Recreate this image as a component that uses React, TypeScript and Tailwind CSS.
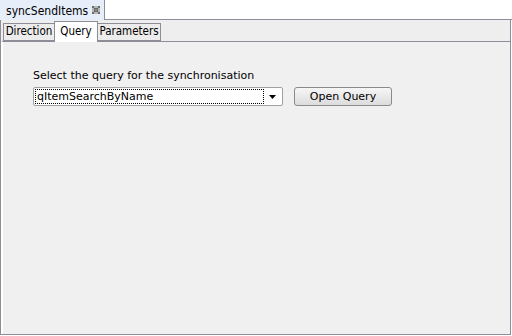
const TABS = [
  { name: "Direction", w: "w-[52px]" },
  { name: "Query", w: "w-[44px]" },
  { name: "Parameters", w: "w-[64px]" },
];

function CloseIcon() {
  return (
    <svg width="8" height="8" viewBox="0 0 8 8" shapeRendering="crispEdges">
      <rect x="0" y="0" width="8" height="8" fill="#b8b8b8" />
      <path
        d="M0 0h2v2H0zM6 0h2v2H6zM2 2h4v4H2zM0 6h2v2H0zM6 6h2v2H6z"
        fill="#6a6a6a"
      />
      <path d="M3 3h2v2H3z" fill="#8a8a8a" />
    </svg>
  );
}

export default function App() {
  const active = "Query";
  return (
    <div className="w-[512px] h-[336px] bg-white flex flex-col text-[11px] text-black font-['Tahoma','DejaVu_Sans',sans-serif] overflow-hidden">
      {/* Editor tab header */}
      <div className="flex h-[20px] shrink-0">
        <div className="w-[105px] flex items-center justify-between pl-[6px] pr-[4px] bg-[#e6eef9] border-r border-[#8d8e98]">
          <span className="text-[12px] leading-none pt-[1px] font-['DejaVu_Sans_Condensed',sans-serif]">
            syncSendItems
          </span>
          <CloseIcon />
        </div>
        <div className="flex-1 border-b border-[#8d8e98]" />
      </div>

      {/* Panel */}
      <div className="flex-1 flex flex-col bg-[#eeeeee] border-l border-r border-b border-[#8d8e98] mr-[1px] mb-[1px]">
        {/* Sub tabs */}
        <div className="flex items-end h-[21px] pl-[2px] shrink-0 text-[11.5px] font-['DejaVu_Sans_Condensed',sans-serif]">
          {TABS.map((t) =>
            t.name === active ? (
              <div
                key={t.name}
                className={`${t.w} h-[21px] flex items-center justify-center bg-white border border-b-0 border-[#8d8e98] -mb-px -mx-px relative z-10`}
              >
                {t.name}
              </div>
            ) : (
              <div
                key={t.name}
                className={`${t.w} h-[18px] flex items-center justify-center bg-[#ececec] border border-[#8d8e98]`}
              >
                {t.name}
              </div>
            )
          )}
        </div>

        {/* Content */}
        <div className="flex-1 bg-[#f0f0f0] border-t border-[#8d8e98] border-l-2 border-l-white pt-[27px] pl-[30px]">
          <div className="text-[11px] leading-[14px] mb-[4px]">
            Select the query for the synchronisation
          </div>
          <div className="flex items-center gap-[11px]">
            <div className="w-[250px] h-[19px] flex items-center bg-white border border-[#a0a0a0] rounded-[2px] p-[1px]">
              <div className="flex-1 h-full flex items-center border border-dotted border-black pl-[1px] leading-none">
                qItemSearchByName
              </div>
              <div className="w-[17px] flex items-center justify-center">
                <svg width="7" height="4" viewBox="0 0 7 4">
                  <path d="M0 0h7L3.5 4z" fill="#000" />
                </svg>
              </div>
            </div>
            <button className="w-[98px] h-[19px] flex items-center justify-center rounded-[3px] border border-[#8a8a8a] bg-gradient-to-b from-[#f6f6f6] to-[#dcdcdc] leading-none">
              Open Query
            </button>
          </div>
        </div>
      </div>
    </div>
  );
}
